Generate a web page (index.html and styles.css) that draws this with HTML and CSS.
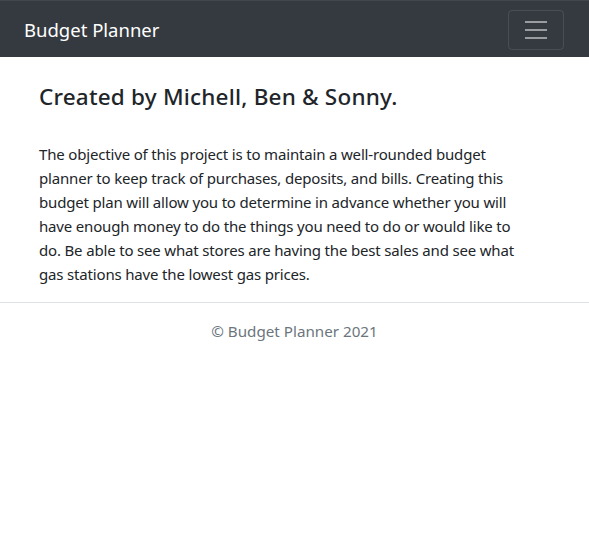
FILE: index.html
```html
<!DOCTYPE html>
<html lang="en">
<head>
<meta charset="utf-8">
<title>Budget Planner</title>
<link rel="stylesheet" href="styles.css">
</head>
<body>
<nav class="navbar">
  <a class="brand" href="#">Budget Planner</a>
  <button class="toggler" type="button" aria-label="Toggle navigation">
    <svg width="30" height="30" viewBox="0 0 30 30"><path stroke="rgba(255,255,255,0.5)" stroke-width="2" stroke-linecap="butt" d="M4 7h22M4 15h22M4 23h22"/></svg>
  </button>
</nav>
<main class="main">
  <h4 class="title">Created by Michell, Ben &amp; Sonny.</h4>
  <p class="intro">The objective of this project is to maintain a well-rounded budget planner to keep track of purchases, deposits, and bills. Creating this budget plan will allow you to determine in advance whether you will have enough money to do the things you need to do or would like to do. Be able to see what stores are having the best sales and see what gas stations have the lowest gas prices.</p>
</main>
<footer class="footer">&copy; Budget Planner 2021</footer>
</body>
</html>
```
FILE: styles.css
```css
* { box-sizing: border-box; }
html, body { margin: 0; padding: 0; }
body {
  font-family: "Noto Sans", "Open Sans", sans-serif;
  font-size: 16px;
  line-height: 1.5;
  color: #212529;
  background: #fff;
}
.navbar {
  background: #343a40;
  height: 57px;
  padding: 9px 25px 8px 24px;
  display: flex;
  align-items: center;
  justify-content: space-between;
  border-top: 1px solid #42474d;
}
.brand {
  color: #fff;
  text-decoration: none;
  font-size: 18.5px;
  line-height: 30px;
}
.toggler {
  width: 56px;
  height: 40px;
  background: transparent;
  border: 1px solid rgba(255,255,255,0.1);
  border-radius: 4px;
  padding: 0;
  display: flex;
  align-items: center;
  justify-content: center;
}
.toggler svg { display: block; }
.main {
  padding: 25px 39px 0;
}
.title {
  margin: 0 0 31px;
  font-size: 22.5px;
  font-weight: 500;
  line-height: 29px;
  letter-spacing: 0.2px;
}
.intro {
  max-width: 485px;
  margin: 0 0 16px;
  font-size: 15px;
  line-height: 24px;
  letter-spacing: -0.17px;
}
.footer {
  border-top: 1px solid #dee2e6;
  padding: 16px 0;
  text-align: center;
  color: #6c757d;
  font-size: 15.2px;
  line-height: 24px;
}
```
